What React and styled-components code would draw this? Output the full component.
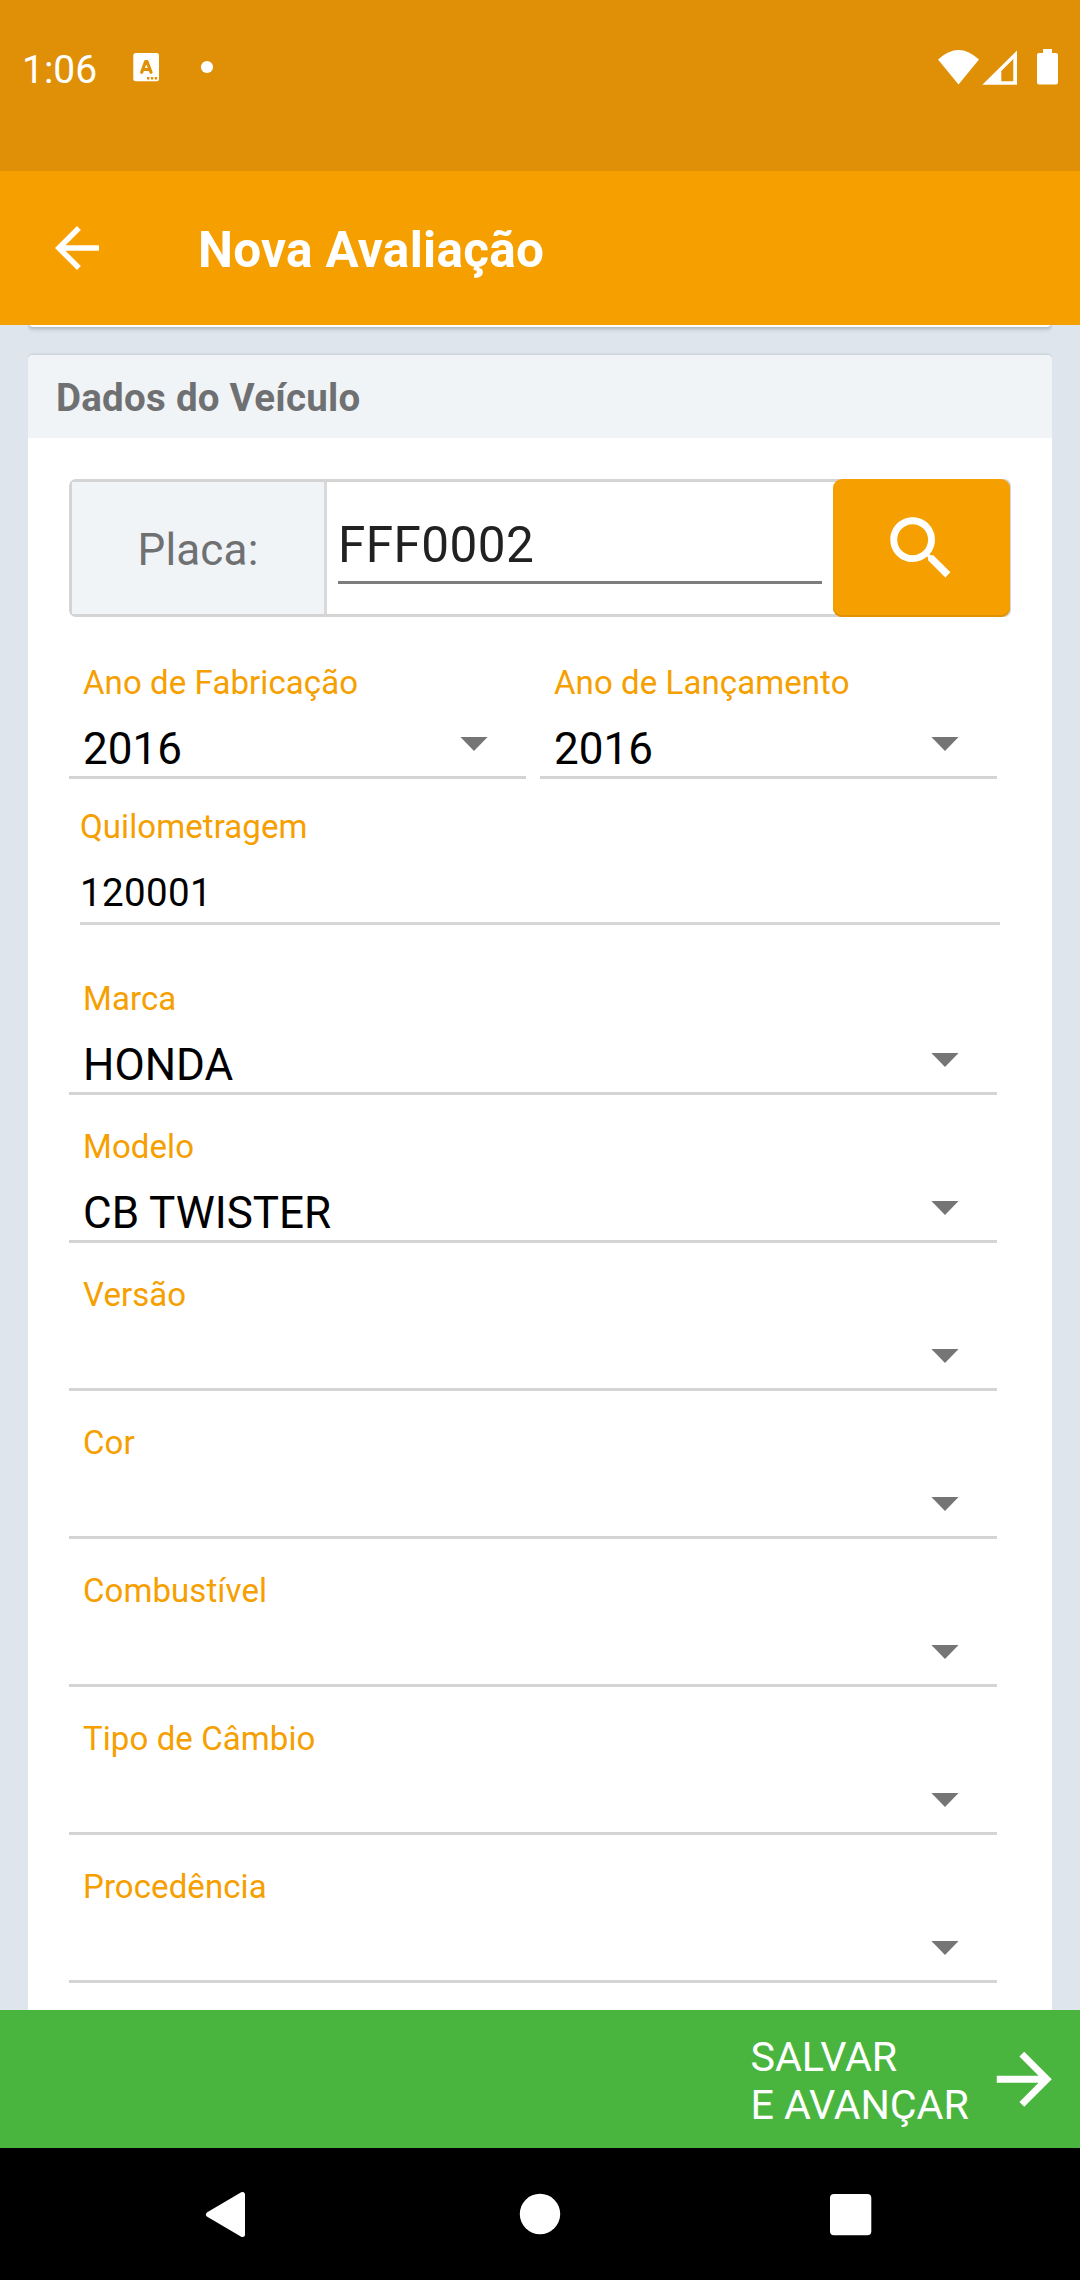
import React from "react";
import styled, { createGlobalStyle } from "styled-components";

const GlobalStyle = createGlobalStyle`
  * { box-sizing: border-box; }
  html, body { margin: 0; padding: 0; }
  body { font-family: Roboto, "Noto Sans", sans-serif; background: #dee5ed; }
`;

const Screen = styled.div`
  width: 1080px;
  height: 2280px;
  display: flex;
  flex-direction: column;
  overflow: hidden;
  background: #dee5ed;
`;

const StatusBar = styled.header`
  flex: none;
  height: 171px;
  background: #df9007;
  color: #fff;
  display: flex;
  align-items: flex-start;
  padding: 40px 19px 0 22px;
`;

const Clock = styled.span`
  width: 108px;
  padding-top: 1px;
  font-size: 39px;
  line-height: 58px;
  white-space: nowrap;
`;

const Notices = styled.svg`
  width: 100px;
  height: 60px;
`;

const SystemIcons = styled.svg`
  width: 130px;
  height: 60px;
  margin-left: auto;
`;

const AppBar = styled.nav`
  flex: none;
  height: 154px;
  background: #f5a000;
  color: #fff;
  display: flex;
  align-items: center;
  padding-left: 44px;
`;

const Icon = styled.svg`
  display: block;
  flex: none;
  width: ${(p) => p.$size}px;
  height: ${(p) => p.$size}px;
  fill: #fff;
`;

const Title = styled.h1`
  margin: 3px 0 0 88px;
  font-size: 49.5px;
  font-weight: 700;
  line-height: 58px;
  letter-spacing: 0.3px;
`;

const Content = styled.main`
  flex: none;
  height: 1685px;
  padding: 0 28px;
  overflow: hidden;
`;

const PreviousCard = styled.div`
  height: 12px;
  margin: -10px 0 28px;
  background: #fff;
  border-radius: 0 0 5px 5px;
  box-shadow: 0 2px 4px rgba(60, 75, 80, 0.32);
  clip-path: inset(0 0 -8px 0);
`;

const Card = styled.section`
  height: 1700px;
  background: #fff;
  border-radius: 5px 5px 0 0;
  box-shadow: 0 0 3px rgba(60, 75, 80, 0.3);
  clip-path: inset(-4px 0 0 0);
`;

const CardHeader = styled.h2`
  margin: 0;
  height: 83px;
  padding: 20px 28px 0;
  font-size: 38.5px;
  line-height: 45px;
  font-weight: 700;
  letter-spacing: 0.25px;
  color: #6f7072;
  background: #f0f4f7;
  border-radius: 5px 5px 0 0;
`;

const Form = styled.form`
  padding: 41px 41px 0;
`;

const PlateGroup = styled.div`
  display: flex;
  height: 138px;
  border: 3px solid #d4d4d4;
  border-radius: 7px;
  background: #fff;
`;

const PlateLabel = styled.label`
  width: 255px;
  border-right: 3px solid #d9d9d9;
  background: #f0f4f7;
  color: #6f7072;
  font-size: 44px;
  line-height: 52px;
  letter-spacing: 0.15px;
  padding-top: 42px;
  text-align: center;
`;

const PlateField = styled.div`
  flex: 1;
  padding: 34px 11px 0;
`;

const PlateValue = styled.div`
  height: 68px;
  border-bottom: 3px solid #7d7d7d;
  color: #212121;
  font-size: 49.5px;
  line-height: 58px;
  letter-spacing: 0.4px;
`;

const SearchButton = styled.button`
  flex: none;
  width: 177px;
  height: 138px;
  margin: -3px -2px -3px 0;
  padding: 0;
  border: 0;
  border-radius: 9px;
  background: #f5a000;
  box-shadow: inset 0 -2px 0 #e19205;
  display: flex;
  align-items: center;
  justify-content: center;
`;

const YearRow = styled.div`
  display: flex;
  gap: 14px;
  width: 928px;
  margin-top: 14px;
`;

const Field = styled.div`
  flex: 1;
  width: 928px;
  height: 148px;
  border-bottom: 3px solid #d4d4d4;
  padding: 33px 14px 0;
`;

const Label = styled.div`
  font-size: 33px;
  line-height: 38px;
  height: 38px;
  letter-spacing: 0.08px;
  color: #f5a000;
  white-space: nowrap;
`;

const ValueRow = styled.div`
  display: flex;
  justify-content: space-between;
  align-items: flex-start;
  margin-top: 21px;
  padding-right: 24px;
`;

const Value = styled.span`
  font-size: 44px;
  line-height: 52px;
  color: #000;
`;

const Caret = styled.svg`
  display: block;
  width: 28px;
  height: 14px;
  margin-top: 14px;
  fill: #757575;
`;

const Mileage = styled.div`
  width: 920px;
  height: 146px;
  margin: 0 0 22px 11px;
  padding-top: 29px;
  border-bottom: 3px solid #d6d6d6;
`;

const MileageValue = styled.div`
  margin-top: 24px;
  font-size: 38.5px;
  line-height: 45px;
  letter-spacing: 0.35px;
  color: #000;
`;

const ActionBar = styled.footer`
  flex: none;
  height: 138px;
  background: #49b53f;
  color: #fff;
  display: flex;
  align-items: center;
  justify-content: flex-end;
  padding-right: 15px;
`;

const ActionText = styled.div`
  width: 232px;
  margin-top: 3px;
  font-size: 41.25px;
  line-height: 48px;
  letter-spacing: -0.1px;
  white-space: nowrap;
`;

const SystemNav = styled.svg`
  display: block;
  flex: none;
  width: 1080px;
  height: 132px;
  background: #000;
`;

function SelectField({ label, value }) {
  return (
    <Field>
      <Label>{label}</Label>
      <ValueRow>
        <Value>{value}</Value>
        <Caret viewBox="0 0 28 14">
          <path d="M.4 0h27.2L14 14z" />
        </Caret>
      </ValueRow>
    </Field>
  );
}

const vehicleFields = [
  ["Marca", "HONDA"],
  ["Modelo", "CB TWISTER"],
  ["Versão", ""],
  ["Cor", ""],
  ["Combustível", ""],
  ["Tipo de Câmbio", ""],
  ["Procedência", ""],
];

export default function App() {
  return (
    <Screen>
      <GlobalStyle />
      <StatusBar>
        <Clock>1:06</Clock>
        <Notices viewBox="130 40 100 60">
          <rect x="133.3" y="53" width="25.7" height="28.3" rx="2.5" fill="#fff" />
          <path
            d="M141.700 72.300L145.600 61.500H147L151 72.300M143.500 69.500H149.200"
            fill="none"
            stroke="#df9007"
            strokeWidth="3.2"
            strokeLinecap="round"
            strokeLinejoin="round"
          />
          <path d="M147 77h2.400v2.400H147zM150.900 77h2.400v2.400H150.900zM154.700 77h2.400v2.400H154.700z" fill="#df9007" />
          <circle cx="207" cy="67" r="6.100" fill="#fff" />
        </Notices>
        <SystemIcons viewBox="931 40 130 60" fill="#fff">
          <path d="M938 59.500Q958.500 40.500 979 59.500L958.500 84.500z" />
          <path
            fillRule="evenodd"
            d="M1017 50.500V84.700H982.300zM1013.300 59V81.200H1001.300V71z"
          />
          <path d="M1043 49h9v4h4a2 2 0 0 1 2 2v27.500a2 2 0 0 1-2 2h-17a2 2 0 0 1-2-2V55a2 2 0 0 1 2-2h4z" />
        </SystemIcons>
      </StatusBar>
      <AppBar>
        <Icon $size={66} viewBox="0 0 24 24">
          <path d="M20 11H7.830l5.590-5.590L12 4l-8 8 8 8 1.410-1.410L7.830 13H20v-2z" />
        </Icon>
        <Title>Nova Avaliação</Title>
      </AppBar>
      <Content>
        <PreviousCard />
        <Card>
          <CardHeader>Dados do Veículo</CardHeader>
          <Form>
            <PlateGroup>
              <PlateLabel>Placa:</PlateLabel>
              <PlateField>
                <PlateValue>FFF0002</PlateValue>
              </PlateField>
              <SearchButton type="button">
                <Icon $size={82.5} viewBox="0 0 24 24">
                  <path d="M15.500 14h-.790l-.280-.270C15.410 12.590 16 11.110 16 9.500 16 5.910 13.090 3 9.500 3S3 5.910 3 9.500 5.910 16 9.500 16c1.610 0 3.090-.590 4.230-1.570l.270.280v.790l5 4.990L20.490 19l-4.990-5zm-6 0C7.010 14 5 11.990 5 9.500S7.010 5 9.500 5 14 7.010 14 9.500 11.990 14 9.500 14z" />
                </Icon>
              </SearchButton>
            </PlateGroup>
            <YearRow>
              <SelectField label="Ano de Fabricação" value="2016" />
              <SelectField label="Ano de Lançamento" value="2016" />
            </YearRow>
            <Mileage>
              <Label>Quilometragem</Label>
              <MileageValue>120001</MileageValue>
            </Mileage>
            {vehicleFields.map(([label, value]) => (
              <SelectField key={label} label={label} value={value} />
            ))}
          </Form>
        </Card>
      </Content>
      <ActionBar>
        <ActionText>
          SALVAR
          <br />E AVANÇAR
        </ActionText>
        <Icon $size={82.5} viewBox="0 0 24 24">
          <path d="M12 4l-1.410 1.410L16.170 11H4v2h12.170l-5.580 5.590L12 20l8-8z" />
        </Icon>
      </ActionBar>
      <SystemNav viewBox="0 2148 1080 132" fill="#fff">
        <path
          d="M208.500 2214.500L242.500 2194.500V2234.500z"
          stroke="#fff"
          strokeWidth="5"
          strokeLinejoin="round"
        />
        <circle cx="540" cy="2214" r="20.200" />
        <rect x="830" y="2194" width="41.300" height="41.300" rx="4" />
      </SystemNav>
    </Screen>
  );
}
